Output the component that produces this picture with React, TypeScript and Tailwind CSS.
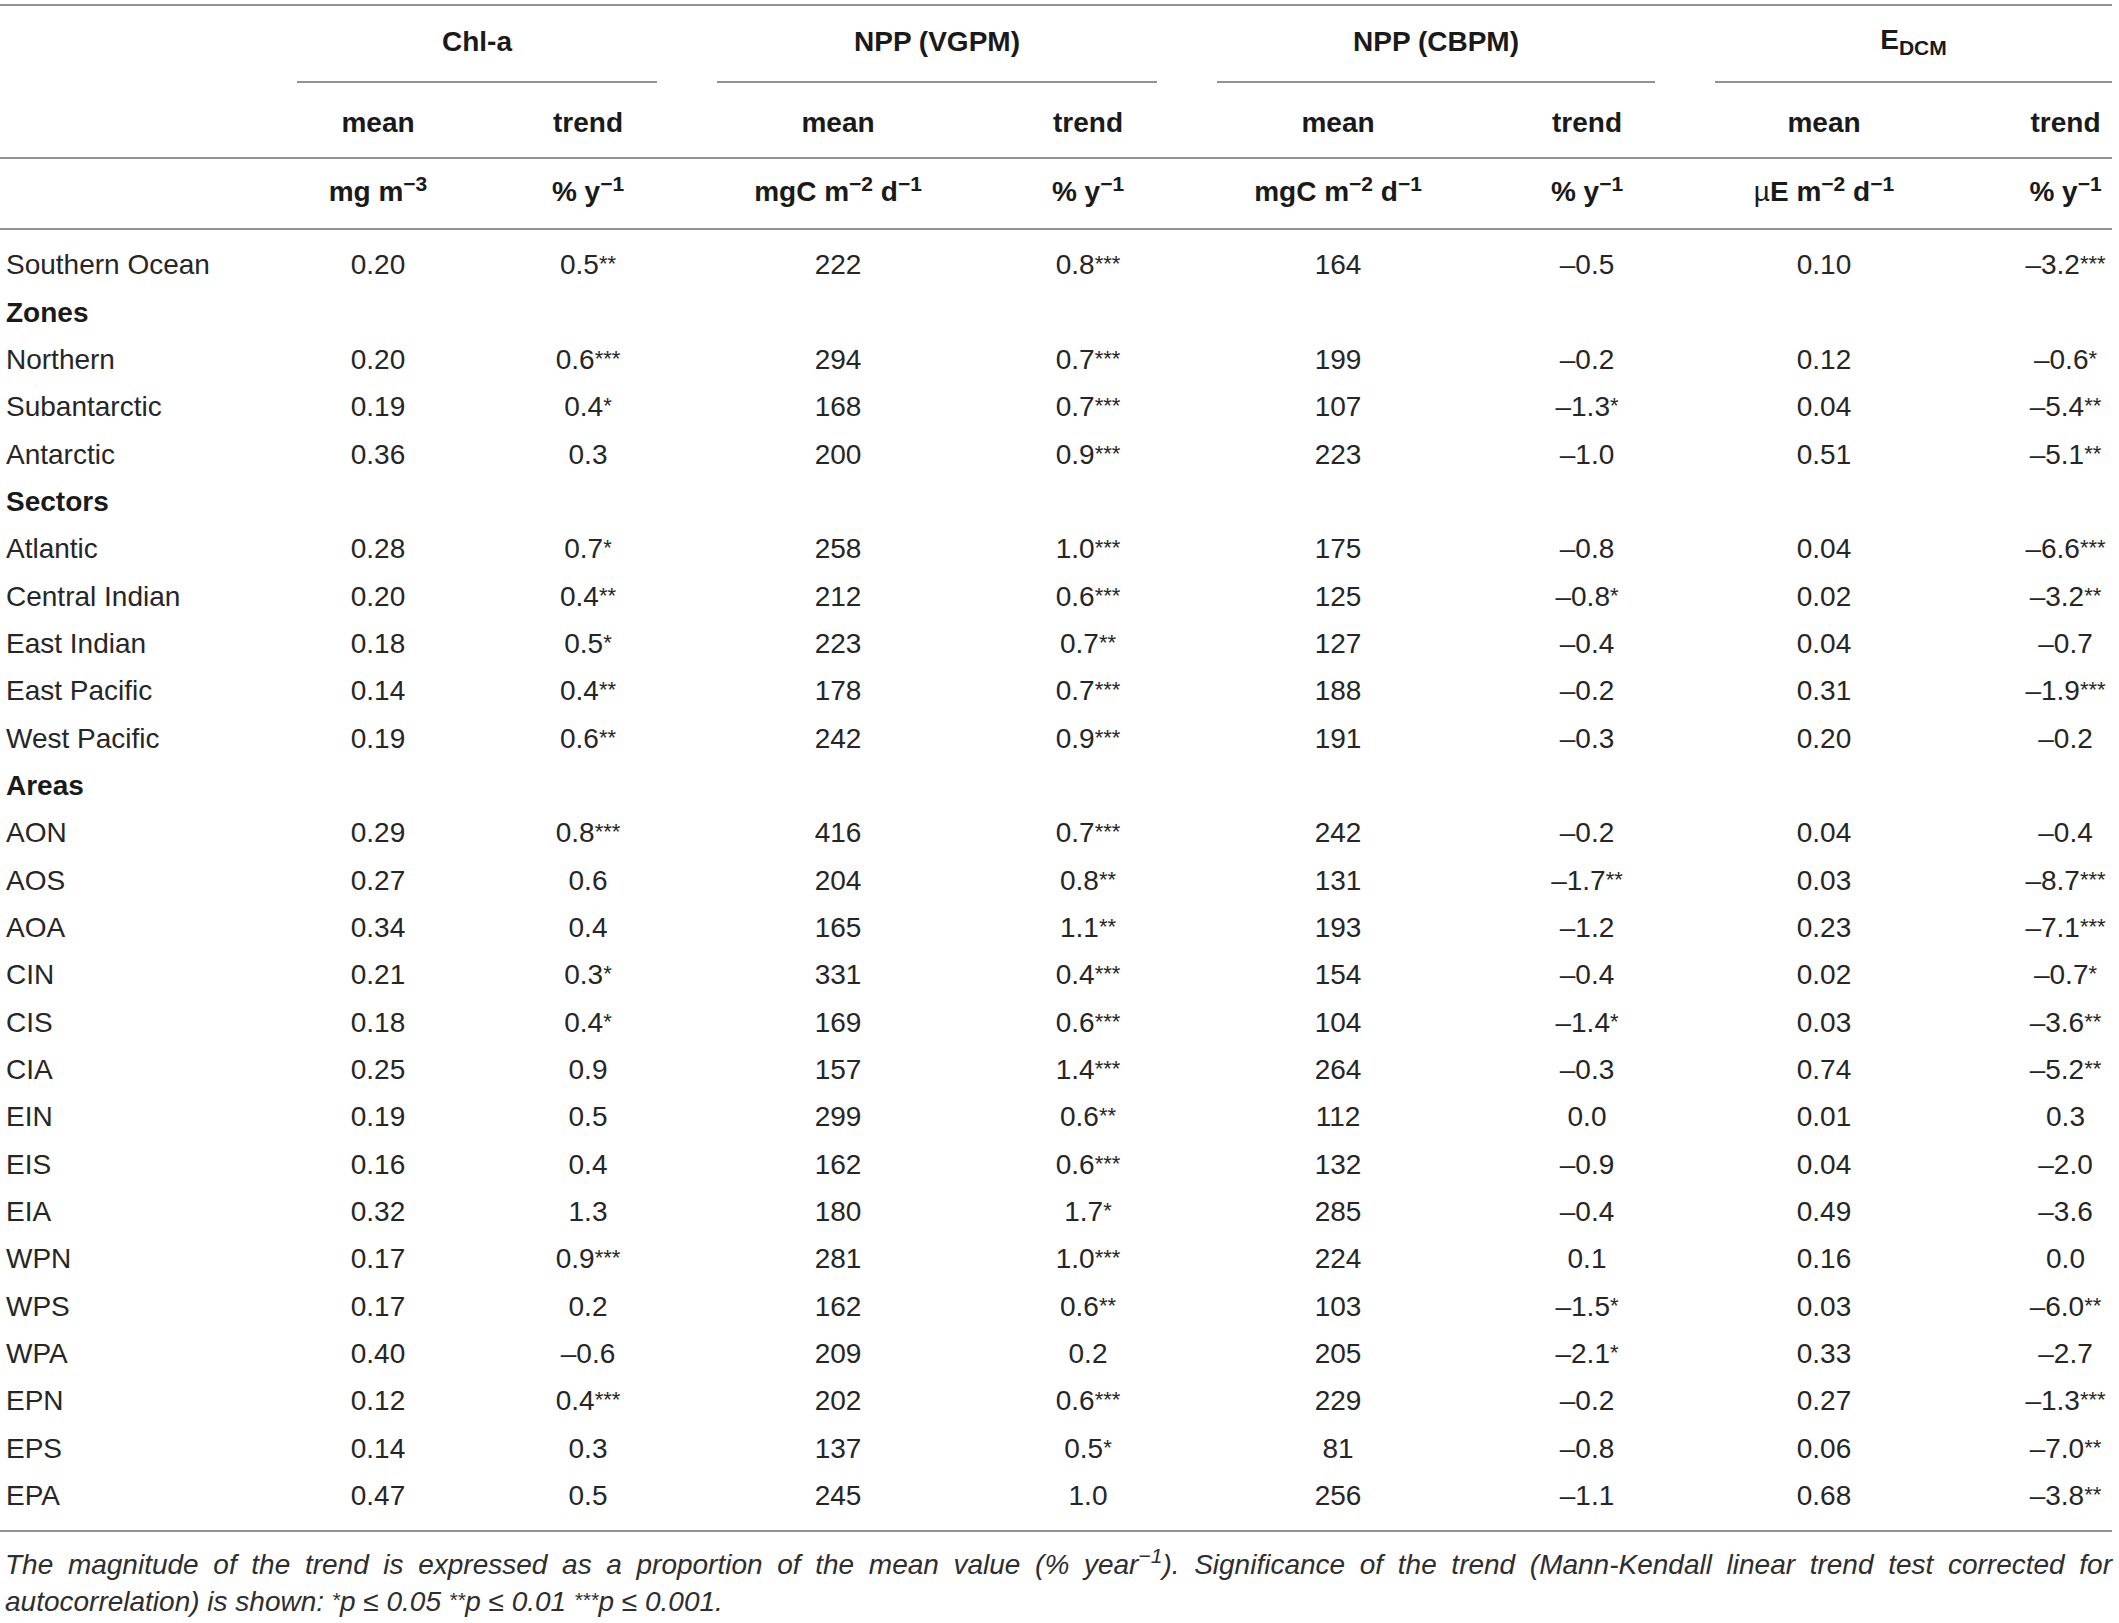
import React from "react";

type Row = string[];

const rows: Row[] = [
  ["Southern Ocean", "0.20", "0.5**", "222", "0.8***", "164", "–0.5", "0.10", "–3.2***"],
  ["Zones"],
  ["Northern", "0.20", "0.6***", "294", "0.7***", "199", "–0.2", "0.12", "–0.6*"],
  ["Subantarctic", "0.19", "0.4*", "168", "0.7***", "107", "–1.3*", "0.04", "–5.4**"],
  ["Antarctic", "0.36", "0.3", "200", "0.9***", "223", "–1.0", "0.51", "–5.1**"],
  ["Sectors"],
  ["Atlantic", "0.28", "0.7*", "258", "1.0***", "175", "–0.8", "0.04", "–6.6***"],
  ["Central Indian", "0.20", "0.4**", "212", "0.6***", "125", "–0.8*", "0.02", "–3.2**"],
  ["East Indian", "0.18", "0.5*", "223", "0.7**", "127", "–0.4", "0.04", "–0.7"],
  ["East Pacific", "0.14", "0.4**", "178", "0.7***", "188", "–0.2", "0.31", "–1.9***"],
  ["West Pacific", "0.19", "0.6**", "242", "0.9***", "191", "–0.3", "0.20", "–0.2"],
  ["Areas"],
  ["AON", "0.29", "0.8***", "416", "0.7***", "242", "–0.2", "0.04", "–0.4"],
  ["AOS", "0.27", "0.6", "204", "0.8**", "131", "–1.7**", "0.03", "–8.7***"],
  ["AOA", "0.34", "0.4", "165", "1.1**", "193", "–1.2", "0.23", "–7.1***"],
  ["CIN", "0.21", "0.3*", "331", "0.4***", "154", "–0.4", "0.02", "–0.7*"],
  ["CIS", "0.18", "0.4*", "169", "0.6***", "104", "–1.4*", "0.03", "–3.6**"],
  ["CIA", "0.25", "0.9", "157", "1.4***", "264", "–0.3", "0.74", "–5.2**"],
  ["EIN", "0.19", "0.5", "299", "0.6**", "112", "0.0", "0.01", "0.3"],
  ["EIS", "0.16", "0.4", "162", "0.6***", "132", "–0.9", "0.04", "–2.0"],
  ["EIA", "0.32", "1.3", "180", "1.7*", "285", "–0.4", "0.49", "–3.6"],
  ["WPN", "0.17", "0.9***", "281", "1.0***", "224", "0.1", "0.16", "0.0"],
  ["WPS", "0.17", "0.2", "162", "0.6**", "103", "–1.5*", "0.03", "–6.0**"],
  ["WPA", "0.40", "–0.6", "209", "0.2", "205", "–2.1*", "0.33", "–2.7"],
  ["EPN", "0.12", "0.4***", "202", "0.6***", "229", "–0.2", "0.27", "–1.3***"],
  ["EPS", "0.14", "0.3", "137", "0.5*", "81", "–0.8", "0.06", "–7.0**"],
  ["EPA", "0.47", "0.5", "245", "1.0", "256", "–1.1", "0.68", "–3.8**"],
];

const GRID =
  "grid grid-cols-[237px_282px_138px_362px_138px_362px_136px_338px_119px]";

function Value({ v }: { v: string }) {
  const m = v.match(/^([^*]*)(\**)$/);
  const num = m ? m[1] : v;
  const stars = m ? m[2] : "";
  return (
    <span className="whitespace-nowrap">
      {num}
      {stars && <span className="text-[22px] align-[3px]">{stars}</span>}
    </span>
  );
}

function Star({ s }: { s: string }) {
  return <span className="text-[21px] align-[4px]">{s}</span>;
}

export default function App() {
  const groups = ["Chl-a", "NPP (VGPM)", "NPP (CBPM)"];
  return (
    <div className="w-[2112px] bg-white text-[#262626] font-['Liberation_Sans',Arial,sans-serif]">
      <div className="h-[4px]" />
      <div className="border-t-2 border-[#939393]" />
      {/* Group header row */}
      <div className={`${GRID} h-[77px] text-[28px] font-bold leading-none text-[#1a1a1a]`}>
        <div />
        {groups.map((g) => (
          <div key={g} className="col-span-2 pl-[60px]">
            <div className="h-full border-b-2 border-[#939393] flex items-center justify-center pb-[4px]">
              {g}
            </div>
          </div>
        ))}
        <div className="col-span-2 pl-[60px]">
          <div className="h-full border-b-2 border-[#939393] flex items-center justify-center pb-[4px]">
            <span>
              E<span className="text-[21px] align-[-6px]">DCM</span>
            </span>
          </div>
        </div>
      </div>
      {/* mean / trend row */}
      <div className={`${GRID} h-[74px] text-[28px] font-bold leading-none text-[#1a1a1a] items-center pt-[6px]`}>
        <div />
        <div className="text-center">mean</div>
        <div className="text-center">trend</div>
        <div className="text-center">mean</div>
        <div className="text-center">trend</div>
        <div className="text-center">mean</div>
        <div className="text-center">trend</div>
        <div className="text-center">mean</div>
        <div className="text-center pl-[26px]">trend</div>
      </div>
      <div className="border-t-2 border-[#939393]" />
      {/* units row */}
      <div className={`${GRID} h-[69px] text-[28px] font-bold leading-none text-[#1a1a1a] items-center pb-[3px]`}>
        <div />
        <div className="text-center">
          mg m<sup>−3</sup>
        </div>
        <div className="text-center">
          % y<sup>−1</sup>
        </div>
        <div className="text-center">
          mgC m<sup>−2</sup> d<sup>−1</sup>
        </div>
        <div className="text-center">
          % y<sup>−1</sup>
        </div>
        <div className="text-center">
          mgC m<sup>−2</sup> d<sup>−1</sup>
        </div>
        <div className="text-center">
          % y<sup>−1</sup>
        </div>
        <div className="text-center">
          <span className="font-normal">µ</span>E m<sup>−2</sup> d<sup>−1</sup>
        </div>
        <div className="text-center pl-[26px]">
          % y<sup>−1</sup>
        </div>
      </div>
      <div className="border-t-2 border-[#939393]" />
      {/* body */}
      <div className="pt-[11.5px] pb-[10px]">
        {rows.map((r, i) =>
          r.length === 1 ? (
            <div key={i} className={`${GRID} h-[47.35px] items-center text-[28px] leading-none font-bold text-[#1a1a1a]`}>
              <div className="col-span-9 pl-[6px]">{r[0]}</div>
            </div>
          ) : (
            <div key={i} className={`${GRID} h-[47.35px] items-center text-[28px] leading-none`}>
              <div className="pl-[6px] whitespace-nowrap">{r[0]}</div>
              {r.slice(1).map((v, j) => (
                <div key={j} className={j === 7 ? "text-center pl-[26px]" : "text-center"}>
                  <Value v={v} />
                </div>
              ))}
            </div>
          )
        )}
      </div>
      <div className="border-t-2 border-[#939393]" />
      {/* footnote */}
      <div className="pt-[15px] pl-[5px] text-[28px] leading-[35px] italic text-[#2e2e2e]">
        <div className="text-justify [text-align-last:justify]">
          The magnitude of the trend is expressed as a proportion of the mean value (% year
          <sup>−1</sup>). Significance of the trend (Mann-Kendall linear trend test corrected for
        </div>
        <div>
          autocorrelation) is shown: <Star s="*" />p ≤ 0.05 <Star s="**" />p ≤ 0.01 <Star s="***" />p ≤ 0.001.
        </div>
      </div>
    </div>
  );
}
